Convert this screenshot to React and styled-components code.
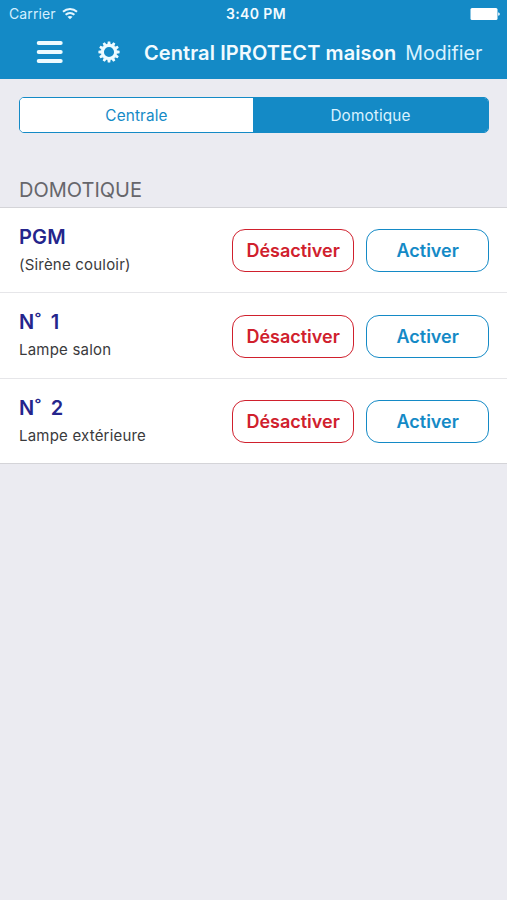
import React from 'react';
import styled, {createGlobalStyle} from 'styled-components';

const colors = {
  primary: '#148ac6',
  danger: '#d0202d',
  background: '#ebebf1',
  heading: '#25258c',
  text: '#3a3a3c',
  faded: '#66666b',
  separator: '#e6e6e9',
  edge: '#d4d4d8'
};

const GlobalStyle = createGlobalStyle`
  * {
    box-sizing: border-box;
  }

  body {
    margin: 0;
    background: ${colors.background};
    font-family: Inter, "Liberation Sans", sans-serif;
  }

  button {
    padding: 0;
    border: 0;
    background: none;
    font-family: inherit;
  }
`;

const Screen = styled.div`
  width: 507px;
  height: 900px;
  overflow: hidden;
  background: ${colors.background};
`;

const Header = styled.header`
  height: 79px;
  background: ${colors.primary};
  color: #f2fbff;
`;

const StatusBar = styled.div`
  display: grid;
  grid-template-columns: 1fr auto 1fr;
  align-items: center;
  height: 27px;
  padding: 0 7px 0 9px;
`;

const Carrier = styled.div`
  display: flex;
  align-items: center;
  gap: 6px;
  font-size: 14px;
  line-height: 18px;
  letter-spacing: 0.1px;
  color: #d3efff;
`;

const Clock = styled.div`
  padding-left: 3px;
  font-size: 14px;
  font-weight: 600;
  line-height: 18px;
  letter-spacing: 0.4px;
`;

const Battery = styled.svg`
  justify-self: end;
`;

const NavBar = styled.div`
  display: flex;
  align-items: center;
  height: 50px;
  padding-left: 36px;
`;

const IconButton = styled.button`
  display: flex;
  margin-right: ${({$gap}) => $gap}px;
  color: #eefbff;
`;

const Title = styled.h1`
  margin: 0;
  padding-top: 1px;
  font-size: 20px;
  font-weight: 600;
  line-height: 26px;
  letter-spacing: 0.1px;
  white-space: nowrap;
`;

const Edit = styled.button`
  margin-left: 9px;
  padding-top: 1px;
  color: #d9f2ff;
  font-size: 19.6px;
  line-height: 26px;
  white-space: nowrap;
`;

const Segments = styled.div`
  display: flex;
  height: 36px;
  margin: 18px 18px 0 19px;
  overflow: hidden;
  border: 1px solid ${colors.primary};
  border-radius: 5px;
  background: #fff;
`;

const Segment = styled.button`
  flex: ${({$active}) => ($active ? '1' : '0 0 233px')};
  padding-top: 1px;
  background: ${({$active}) => ($active ? colors.primary : '#fff')};
  color: ${({$active}) => ($active ? '#d9f2ff' : colors.primary)};
  font-size: 15.3px;
  letter-spacing: 0.15px;
`;

const SectionTitle = styled.h2`
  height: 29px;
  margin: 45px 0 0 19px;
  color: ${colors.faded};
  font-size: 20px;
  font-weight: 400;
  line-height: 24px;
`;

const List = styled.div`
  display: grid;
  grid-template-rows: 85px 86px 85px;
  border-top: 1px solid ${colors.edge};
  background: #fff;
`;

const Row = styled.div`
  display: flex;
  align-items: center;
  padding: 1px 18px 0 19px;
  border-bottom: 1px solid ${colors.separator};

  &:last-child {
    border-color: ${colors.edge};
  }
`;

const Info = styled.div`
  flex: 1;
`;

const Name = styled.div`
  color: ${colors.heading};
  font-size: 20px;
  font-weight: 600;
  line-height: 28px;
  letter-spacing: 0.2px;
  word-spacing: 4px;
`;

const Detail = styled.div`
  color: ${colors.text};
  font-size: 15px;
  line-height: 28px;
  letter-spacing: 0.2px;
`;

const Action = styled.button`
  width: 122.6px;
  height: 43px;
  margin-left: ${({$gap}) => $gap || 0}px;
  border: 1.5px solid ${({$color}) => $color};
  border-radius: 13px;
  color: ${({$color}) => $color};
  font-size: 18px;
  font-weight: 600;
`;

const devices = [
  {name: 'PGM', detail: '(Sirène couloir)'},
  {name: 'N˚ 1', detail: 'Lampe salon'},
  {name: 'N˚ 2', detail: 'Lampe extérieure'}
];

const WifiIcon = () => (
  <svg width="16" height="12" viewBox="0 0 16 12" fill="none" stroke="#e6f7ff" strokeWidth="2">
    <path d="M1 3.8C5 0.1 11 0.1 15 3.8" />
    <path d="M3.6 6.8C6.2 4.5 9.8 4.5 12.4 6.8" />
    <path d="M8 11.3L5.4 8.8C7 7.6 9 7.6 10.6 8.8Z" fill="#e6f7ff" stroke="none" />
  </svg>
);

const MenuIcon = () => (
  <svg width="27" height="24" viewBox="0 0 27 24" stroke="currentColor" strokeWidth="4" strokeLinecap="round">
    <path d="M2.7 3H24.7M2.7 12H24.7M2.7 21H24.7" />
  </svg>
);

const teeth = Array.from({length: 12}, (_, i) => i * 30);

const GearIcon = () => (
  <svg width="22" height="22" viewBox="-11 -11 22 22">
    <circle r="6.6" fill="none" stroke="currentColor" strokeWidth="3.1" />
    {teeth.map(angle => (
      <path key={angle} d="M-1.7 -7.5L-1.2 -10.6H1.2L1.7 -7.5Z" fill="currentColor" transform={`rotate(${angle})`} />
    ))}
  </svg>
);

const Device = ({name, detail}) => (
  <Row>
    <Info>
      <Name>{name}</Name>
      <Detail>{detail}</Detail>
    </Info>
    <Action $color={colors.danger}>Désactiver</Action>
    <Action $color={colors.primary} $gap={12}>Activer</Action>
  </Row>
);

const App = () => (
  <Screen>
    <GlobalStyle />
    <Header>
      <StatusBar>
        <Carrier>
          Carrier
          <WifiIcon />
        </Carrier>
        <Clock>3:40 PM</Clock>
        <Battery width="30" height="12" viewBox="0 0 30 12" fill="#fff">
          <rect x="0.5" width="27" height="12" rx="1.5" />
          <path d="M28.2 4.2Q29.8 4.6 29.8 6T28.2 7.8Z" />
        </Battery>
      </StatusBar>
      <NavBar>
        <IconButton aria-label="Menu" $gap={35}>
          <MenuIcon />
        </IconButton>
        <IconButton aria-label="Réglages" $gap={24}>
          <GearIcon />
        </IconButton>
        <Title>Central IPROTECT maison</Title>
        <Edit>Modifier</Edit>
      </NavBar>
    </Header>
    <Segments>
      <Segment>Centrale</Segment>
      <Segment $active>Domotique</Segment>
    </Segments>
    <SectionTitle>DOMOTIQUE</SectionTitle>
    <List>
      {devices.map(device => (
        <Device key={device.name} {...device} />
      ))}
    </List>
  </Screen>
);

export default App;
